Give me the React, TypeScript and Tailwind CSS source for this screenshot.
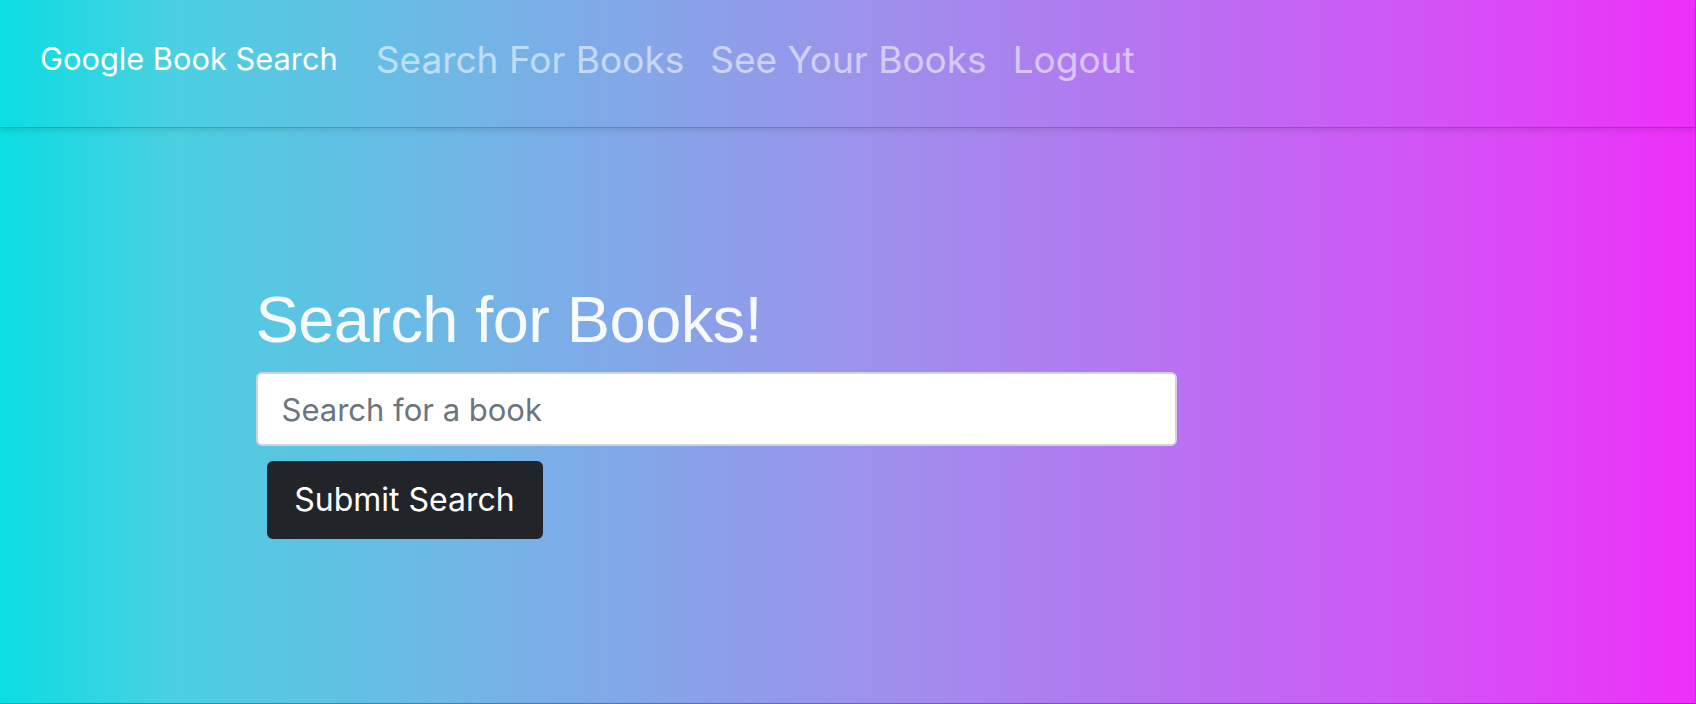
import React from 'react';

const links = ['Search For Books', 'See Your Books', 'Logout'];

const App = () => {
  return (
    <div className="min-h-[704px] w-full border-r border-b border-black/30 bg-[linear-gradient(90deg,#0bdde1_0%,#4ad0e1_10%,#72b5e6_28%,#9a94eb_50%,#bd6cf2_72%,#d84cf6_88%,#ee2ff9_100%)] font-['Inter',sans-serif]">
      <nav className="flex h-[127px] items-center pb-[8px] pl-[40px] shadow-[0_1px_0_rgba(0,0,0,0.12),0_3px_6px_rgba(0,0,0,0.12)]">
        <a className="text-[30.8px] leading-none text-white">Google Book Search</a>
        <div className="ml-[38px] flex gap-[26px]">
          {links.map((link) => (
            <a key={link} className="text-[37px] leading-none text-white/55">
              {link}
            </a>
          ))}
        </div>
      </nav>

      <main className="mx-auto max-w-[1184px] pt-[160px]">
        <h1 className="font-['Liberation_Sans',Arial,sans-serif] text-[65px] leading-none tracking-[-0.6px] text-[#f8f9fa]">
          Search for Books!
        </h1>
        <form className="mt-[20px]">
          <input
            type="text"
            placeholder="Search for a book"
            className="h-[74px] w-[921px] rounded-md border-2 border-[#ced4da] bg-white pl-[24px] text-[31px] text-[#212529] outline-none placeholder:text-[#6c757d]"
          />
          <button
            type="button"
            className="ml-[11px] mt-[15px] block h-[78px] w-[276px] rounded-md bg-[#212529] text-[32px] text-white"
          >
            Submit Search
          </button>
        </form>
      </main>
    </div>
  );
};

export default App;
